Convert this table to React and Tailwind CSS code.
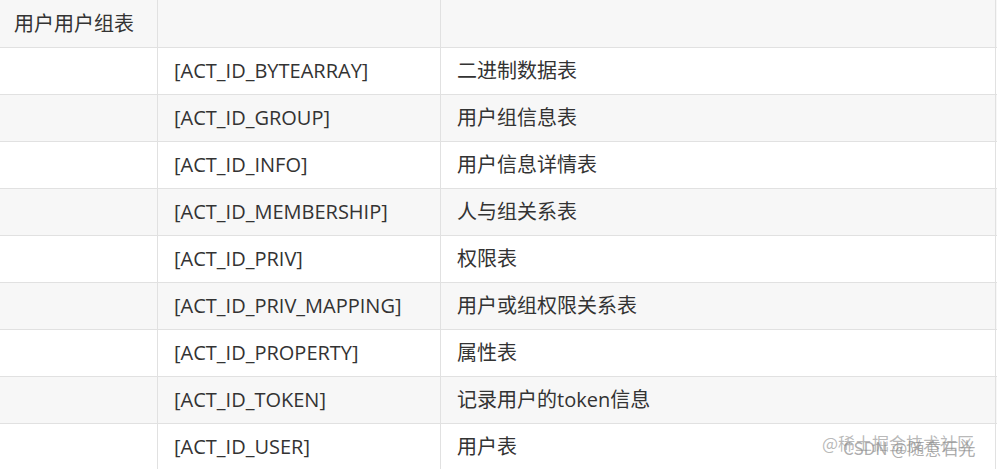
import React from "react";

const rows = [
  ["用户用户组表", "", ""],
  ["", "[ACT_ID_BYTEARRAY]", "二进制数据表"],
  ["", "[ACT_ID_GROUP]", "用户组信息表"],
  ["", "[ACT_ID_INFO]", "用户信息详情表"],
  ["", "[ACT_ID_MEMBERSHIP]", "人与组关系表"],
  ["", "[ACT_ID_PRIV]", "权限表"],
  ["", "[ACT_ID_PRIV_MAPPING]", "用户或组权限关系表"],
  ["", "[ACT_ID_PROPERTY]", "属性表"],
  ["", "[ACT_ID_TOKEN]", "记录用户的token信息"],
  ["", "[ACT_ID_USER]", "用户表"],
];

export default function App() {
  return (
    <div
      className="relative w-[997px] h-[469px] overflow-hidden bg-white text-[#333333] text-[20px]"
      style={{ fontFamily: '"Open Sans", "Noto Sans CJK SC", sans-serif' }}
    >
      <div>
        {rows.map((r, i) => (
          <div
            key={i}
            className={`flex border-b border-[#e1e1e1] ${
              i === 0 ? "h-[48px]" : "h-[47px]"
            } ${i % 2 === 0 ? "bg-[#f7f7f7]" : "bg-white"}`}
          >
            <div className="w-[158px] shrink-0 border-r border-[#e1e1e1] flex items-center pl-[14px]">
              {r[0]}
            </div>
            <div className="w-[283px] shrink-0 border-r border-[#e1e1e1] flex items-center pl-[16px]">
              {r[1]}
            </div>
            <div className="w-[555px] shrink-0 border-r border-[#e1e1e1] flex items-center pl-[16px]">
              {r[2]}
            </div>
          </div>
        ))}
      </div>
      <div
        className="absolute left-[822px] top-[430px] text-[17px] text-[#9a9a9a]/70 whitespace-nowrap"
        style={{ fontFamily: '"Noto Sans CJK SC", sans-serif' }}
      >
        @稀土掘金技术社区
      </div>
      <div
        className="absolute left-[843px] top-[435px] text-[17px] text-[#8a8a8a]/70 whitespace-nowrap"
        style={{ fontFamily: '"Noto Sans CJK SC", sans-serif' }}
      >
        CSDN @随意石光
      </div>
    </div>
  );
}
